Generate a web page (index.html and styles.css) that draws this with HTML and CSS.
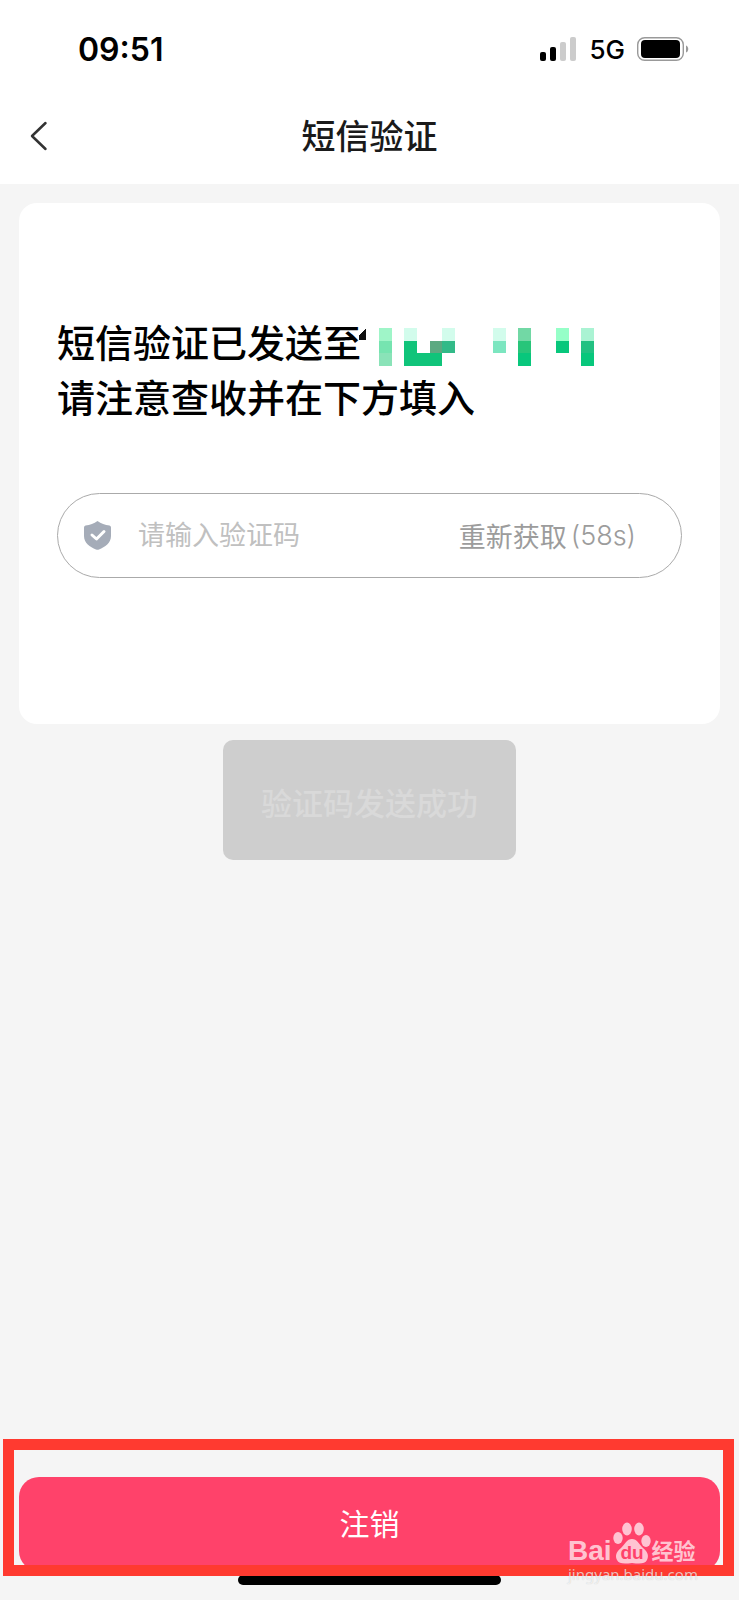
FILE: index.html
```html
<!DOCTYPE html>
<html lang="zh-CN">
<head>
	<meta charset="UTF-8">
	<meta name="viewport" content="width=device-width, initial-scale=1">
	<title>短信验证</title>
	<link rel="stylesheet" href="styles.css">
</head>
<body>
	<header>
		<div class="status">
			<span class="time">09:51</span>
			<div class="status-icons">
				<svg width="37" height="24" viewBox="0 0 37 24" aria-hidden="true">
					<rect x="0" y="15" width="6" height="9" rx="2"/>
					<rect x="10" y="10" width="6" height="14" rx="2"/>
					<rect x="20" y="5" width="6" height="19" rx="2" fill="#ccc"/>
					<rect x="30" y="0" width="6" height="24" rx="2" fill="#ccc"/>
				</svg>
				<span class="network">5G</span>
				<svg width="52" height="24" viewBox="0 0 52 24" aria-hidden="true">
					<rect x="0.7" y="0.7" width="45.6" height="22.6" rx="7" fill="none" stroke="#999" stroke-width="1.4"/>
					<rect x="4" y="3" width="39" height="18" rx="4"/>
					<path d="M49 8.500c3 1 3 6 0 7z" fill="#999"/>
				</svg>
			</div>
		</div>
		<nav class="navbar">
			<button class="back" aria-label="返回">
				<svg width="18" height="30" viewBox="0 0 18 30" aria-hidden="true">
					<path d="M15.500 2L2 15L15.500 28" fill="none" stroke="#333" stroke-width="2.500" stroke-linecap="round" stroke-linejoin="round"/>
				</svg>
			</button>
			<h1>短信验证</h1>
		</nav>
	</header>

	<main>
		<section class="card">
			<div class="message">
				<p class="sent">短信验证已发送至<svg class="mosaic" width="236" height="38" viewBox="0 0 236 38" shape-rendering="crispEdges" aria-hidden="true">
					<path d="M7 0V12H0V7z" fill="#111"/>
					<path d="M20 0h13v13h-13z" fill="#9ff5c8"/>
					<path d="M20 13h13v12h-13z" fill="#76e4b0"/>
					<path d="M20 25h13v13h-13z" fill="#8ae3b8"/>
					<path d="M45 0h13v13h-13zM83 0h13v13h-13zM134 0h13v13h-13z" fill="#d2fcec"/>
					<path d="M45 13h13v12h25v13h-38z" fill="#10c47a"/>
					<path d="M71 13h12v12h-12z" fill="#5ca981"/>
					<path d="M83 13h13v12h-13z" fill="#32ba88"/>
					<path d="M134 13h13v12h-13z" fill="#7ce6c0"/>
					<path d="M159 0h13v13h-13z" fill="#72d8a5"/>
					<path d="M159 13h13v12h-13z" fill="#28c57a"/>
					<path d="M159 25h13v13h-13zM197 13h13v12h-13zM222 25h13v13h-13z" fill="#08c77c"/>
					<path d="M197 0h13v13h-13z" fill="#96ffc8"/>
					<path d="M222 0h13v13h-13z" fill="#aaf3d3"/>
					<path d="M222 13h13v12h-13z" fill="#22c182"/>
				</svg></p>
				<p>请注意查收并在下方填入</p>
			</div>
			<div class="code">
				<svg width="27" height="29" viewBox="0 0 27 29" aria-hidden="true">
					<path d="M13.500 0C17 2.500 21 4 25.500 4.500Q27 5 27 6.500V15C27 22 21 26 15 28.500Q13.500 29 12 28.500C6 26 0 22 0 15V6.500Q0 5 1.500 4.500C6 4 10 2.500 13.500 0z" fill="#a5acb8"/>
					<path d="M8 14L12.500 18L20 10.500" fill="none" stroke="#fff" stroke-width="3" stroke-linecap="round" stroke-linejoin="round"/>
				</svg>
				<input type="text" inputmode="numeric" placeholder="请输入验证码" aria-label="验证码">
				<button class="resend">重新获取<span class="count">(58s)</span></button>
			</div>
		</section>
		<div class="toast" role="status">验证码发送成功</div>
	</main>

	<footer>
		<button class="cancel">注销</button>
		<div class="home-bar"></div>
		<div class="highlight"></div>
		<div class="watermark">
			<div class="brand">
				<span class="bai">Bai</span>
				<svg width="40" height="42" viewBox="0 0 40 42" aria-hidden="true">
					<ellipse cx="6" cy="16" rx="4.700" ry="6"/>
					<ellipse cx="15" cy="7" rx="4.800" ry="6.500"/>
					<ellipse cx="27" cy="7" rx="4.800" ry="6.500"/>
					<ellipse cx="34" cy="19" rx="4.700" ry="6"/>
					<path d="M20 17C25 17 27 22 31 26C36 30 37 34 35 38C33 42 28 42 20 41C12 42 7 42 5 38C3 34 4 30 9 26C13 22 15 17 20 17z"/>
					<text x="20" y="37" text-anchor="middle" class="du">du</text>
				</svg>
				<span class="jingyan">经验</span>
			</div>
			<div class="site">jingyan.baidu.com</div>
		</div>
	</footer>
</body>
</html>
```

FILE: styles.css
```css
* {
	box-sizing: border-box;
}

body {
	display: flex;
	flex-direction: column;
	min-height: 100vh;
	margin: 0;
	background-color: #f5f5f5;
	color: #000;
	font-family: Inter, "Noto Sans CJK SC", sans-serif;
}

h1, p {
	margin: 0;
}

button, input {
	padding: 0;
	border: 0;
	background: none;
	font-family: inherit;
}

header {
	background-color: #fff;
}

.status {
	display: flex;
	align-items: center;
	justify-content: space-between;
	height: 98px;
	padding: 0 50px 0 78px;
}

.time {
	font-size: 32px;
	font-weight: 600;
}

.status-icons {
	display: flex;
	align-items: center;
	gap: 12px;
}

.network {
	font-size: 26px;
	font-weight: 500;
}

.navbar {
	display: grid;
	grid-template-columns: 60px 1fr 60px;
	align-items: center;
	height: 86px;
	padding-bottom: 10px;
}

.back {
	display: flex;
	padding-left: 30px;
}

h1 {
	padding-top: 2px;
	color: #1a1a1a;
	font-size: 34px;
	font-weight: 500;
	line-height: 48px;
	text-align: center;
}

.card {
	margin: 19px 19px 16px;
	padding: 113px 38px 146px;
	border-radius: 18px;
	background-color: #fff;
}

.message {
	font-size: 38px;
	font-weight: 500;
	line-height: 55px;
}

.sent {
	display: flex;
	align-items: center;
	white-space: nowrap;
}

.mosaic {
	flex: none;
	margin-top: 6px;
	margin-left: -2px;
}

.code {
	display: flex;
	align-items: center;
	height: 85px;
	margin-top: 67px;
	padding: 0 45px 0 26px;
	border: 1px solid #aaa;
	border-radius: 43px;
}

.code svg {
	flex: none;
}

.code input {
	flex: 1;
	min-width: 0;
	margin-left: 27px;
	font-size: 27px;
	outline: 0;
}

.code input::placeholder {
	color: #c0c0c0;
}

.resend {
	display: flex;
	align-items: center;
	gap: 4px;
	color: #9c9c9c;
	font-size: 27px;
}

.count {
	font-weight: 300;
}

.toast {
	width: fit-content;
	margin: 0 auto;
	padding: 8px 38px 0;
	border-radius: 10px;
	background-color: #cecece;
	color: #d9d9d9;
	font-size: 31px;
	font-weight: 500;
	line-height: 112px;
}

footer {
	position: relative;
	margin-top: auto;
	padding: 38px 19px 15px;
}

.cancel {
	display: block;
	width: 100%;
	height: 94px;
	padding-bottom: 4px;
	border-radius: 20px;
	background-color: #ff426a;
	color: #fff;
	font-size: 30px;
}

.home-bar {
	width: 263px;
	height: 10px;
	margin: 4px auto 0;
	border-radius: 5px;
	background-color: #000;
}

/* marks the button over the page */
.highlight {
	position: absolute;
	inset: 0 5px 24px 3px;
	border: 11px solid #ff3a30;
	pointer-events: none;
}

.watermark {
	position: absolute;
	right: 38px;
	bottom: 16px;
	width: 133px;
	color: rgba(255, 255, 255, .7);
	pointer-events: none;
}

.brand {
	display: flex;
	align-items: flex-end;
}

.brand svg {
	flex: none;
	fill: #ffc4d2;
}

.bai, .du {
	font-family: "Liberation Sans", sans-serif;
}

.bai, .jingyan {
	font-weight: 700;
	line-height: 26px;
}

.bai {
	font-size: 28px;
}

.brand .du {
	fill: #ff426a;
	font-size: 19px;
	font-weight: 700;
}

.jingyan {
	font-size: 22px;
}

.site {
	font-family: "Noto Sans", sans-serif;
	font-size: 15px;
	line-height: 20px;
	text-shadow: 0 0 1px rgba(0, 0, 0, .2);
}
```
